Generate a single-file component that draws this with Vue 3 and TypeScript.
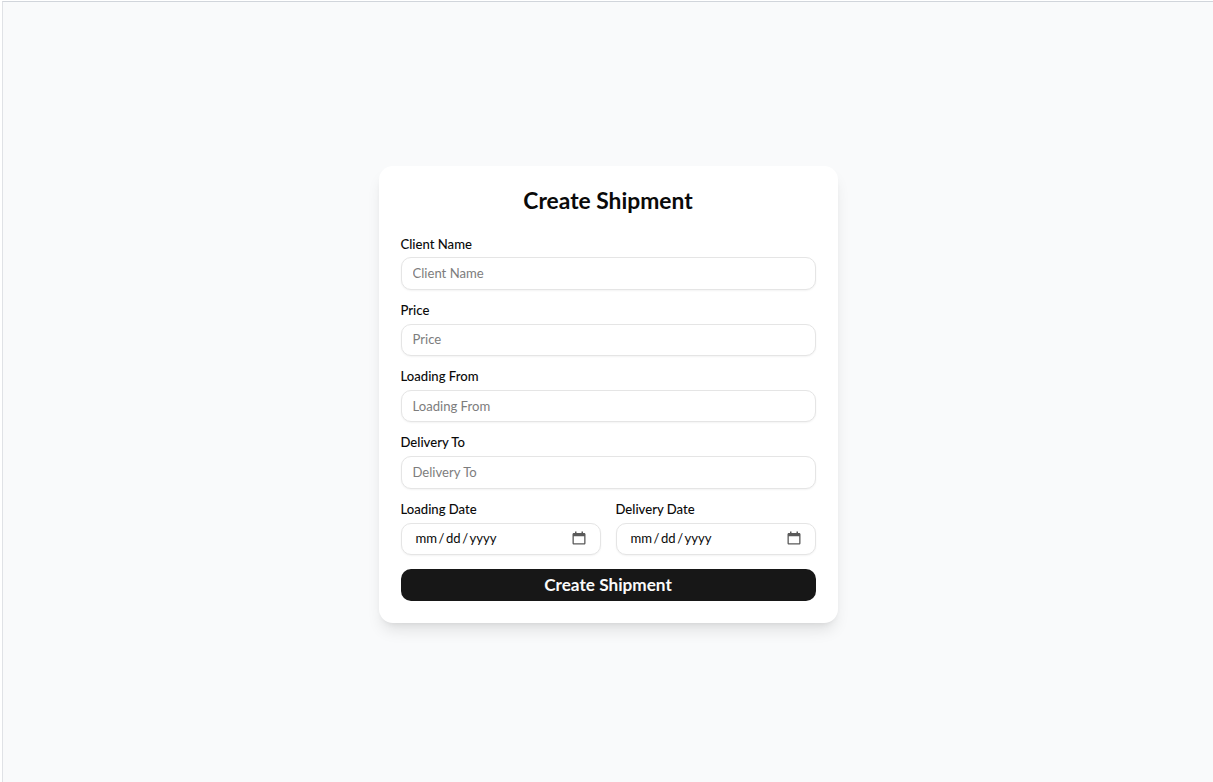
<script setup lang="ts">
const fields = ['Client Name', 'Price', 'Loading From', 'Delivery To']
const dates = ['Loading Date', 'Delivery Date']
</script>

<template>
  <div class="page">
    <form class="card" @submit.prevent>
      <h1 class="title">Create Shipment</h1>
      <div v-for="f in fields" :key="f" class="field">
        <label class="label">{{ f }}</label>
        <input class="input" type="text" :placeholder="f" />
      </div>
      <div class="dates">
        <div v-for="d in dates" :key="d" class="field date">
          <label class="label">{{ d }}</label>
          <div class="date-wrap">
            <input class="input date-input" type="date" />
            <svg class="cal" width="14" height="14" viewBox="0 0 14 14" aria-hidden="true">
              <path d="M3 .5h1.5V2h5V.5H11V2h1.2c.7 0 1.3.6 1.3 1.3v8.9c0 .7-.6 1.3-1.3 1.3H1.8c-.7 0-1.3-.6-1.3-1.3V3.3C.5 2.6 1.1 2 1.8 2H3V.5zM1.8 5.2v7h10.4v-7H1.8z" fill="#5a5a5a" fill-rule="evenodd" />
            </svg>
          </div>
        </div>
      </div>
      <button class="submit" type="submit">Create Shipment</button>
    </form>
  </div>
</template>

<style>
html, body { margin: 0; background: #fff; }
</style>

<style scoped>
.page {
  box-sizing: border-box;
  margin-left: 2px;
  margin-top: 1px;
  height: 781px;
  border-top: 1px solid #d1d5db;
  border-left: 1px solid #e0e2e6;
  background: #f9fafb;
  display: flex;
  justify-content: center;
  align-items: flex-start;
  padding-top: 164px;
  font-family: Lato, sans-serif;
  color: #0a0a0a;
}
.card {
  box-sizing: border-box;
  width: 459px;
  height: 457px;
  background: #fff;
  border-radius: 14px;
  padding: 22px;
  box-shadow: 0 10px 15px -3px rgba(0,0,0,.1), 0 4px 6px -4px rgba(0,0,0,.1);
}
.title {
  margin: 0 0 24.5px;
  font-size: 22.8px;
  line-height: 24px;
  font-weight: 700;
  text-align: center;
}
.field { display: flex; flex-direction: column; margin-bottom: 13.1px; }
.label { font-size: 13.1px; line-height: 15px; font-weight: 500; margin-bottom: 5.9px; }
.input {
  box-sizing: border-box;
  width: 100%;
  height: 32.3px;
  border: 1px solid #e5e5e5;
  border-radius: 10px;
  padding: 0 11px 1px;
  font: inherit;
  font-size: 13.1px;
  background: #fff;
  box-shadow: 0 1px 2px rgba(0,0,0,.05);
  outline: none;
  color: #0a0a0a;
}
.input::placeholder { color: #7d7d7d; }
.date-wrap { position: relative; }
.date-input { padding: 0 13px 1px; display: block; }
.date-input::-webkit-calendar-picker-indicator { opacity: 0; }
.date-input::-webkit-datetime-edit-text { padding: 0 .5px; }
.cal { position: absolute; right: 15px; top: 8px; pointer-events: none; }
.dates { display: flex; gap: 15px; margin-bottom: 1px; }
.date { flex: 1; min-width: 0; }
.submit {
  display: block;
  width: 100%;
  height: 32px;
  border: 0;
  border-radius: 10px;
  background: #171717;
  color: #fafafa;
  font: inherit;
  font-size: 17.2px;
  font-weight: 700;
}
</style>
